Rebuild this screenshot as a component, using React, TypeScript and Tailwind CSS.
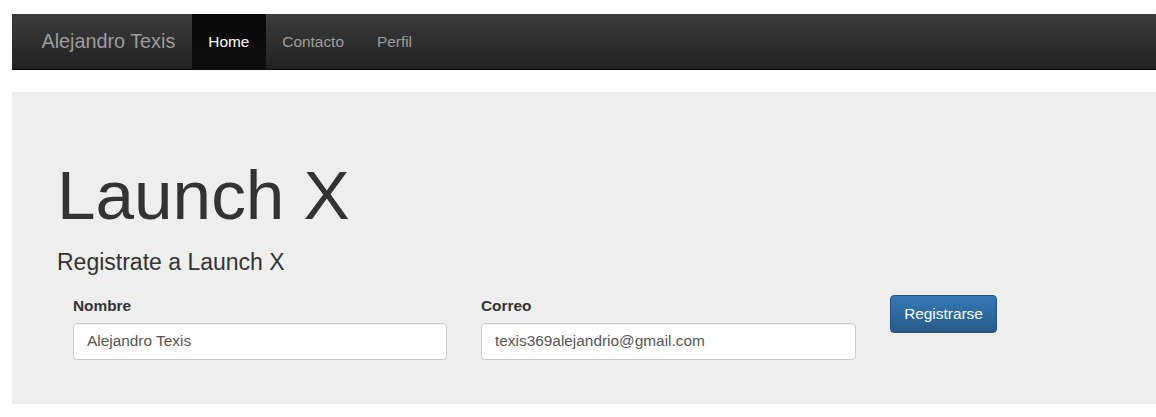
import React from 'react'

const font = { fontFamily: '"Liberation Sans", Arial, Helvetica, sans-serif' }

const navLinks = [
  { label: 'Home', active: true },
  { label: 'Contacto', active: false },
  { label: 'Perfil', active: false },
]

function Navbar() {
  return (
    <nav className="flex h-[56px] items-stretch border-b border-[#080808] bg-gradient-to-b from-[#3c3c3c] to-[#222222] pl-[13px]">
      <a className="flex items-center px-[16.5px] text-[19.8px] text-[#9d9d9d]">Alejandro Texis</a>
      <ul className="flex items-stretch">
        {navLinks.map((link) => (
          <li
            key={link.label}
            className={
              link.active
                ? 'flex items-center bg-gradient-to-b from-[#080808] to-[#0f0f0f] px-[16.5px] text-[15.4px] text-white'
                : 'flex items-center px-[16.5px] text-[15.4px] text-[#9d9d9d]'
            }
          >
            {link.label}
          </li>
        ))}
      </ul>
    </nav>
  )
}

function Field({ label, value, width }: { label: string; value: string; width: string }) {
  return (
    <div className={`flex flex-col ${width}`}>
      <label className="mb-[7px] h-[22px] text-[15.4px] leading-[23px] font-bold text-[#333]">{label}</label>
      <input
        readOnly
        value={value}
        className="h-[37px] w-full rounded-[4px] border border-[#cccccc] bg-white px-[13px] text-[15.4px] text-[#555] shadow-[inset_0_1px_1px_rgba(0,0,0,0.075)] outline-none"
        style={font}
      />
    </div>
  )
}

export default function App() {
  return (
    <div className="min-h-screen overflow-hidden bg-white pt-[14px] pl-[12px]" style={font}>
      <Navbar />

      {/* Jumbotron */}
      <section className="mt-[22px] h-[312px] bg-[#eeeeee] pt-[69px] pl-[45px]">
        <h1 className="text-[69.3px] leading-none font-normal text-[#333]">Launch X</h1>
        <h3 className="mt-[20.7px] h-[23px] text-[23px] leading-none font-normal text-[#333]">Registrate a Launch X</h3>

        <div className="mt-[20px] flex items-start gap-[34px] pl-[16px]">
          <Field label="Nombre" value="Alejandro Texis" width="w-[374px]" />
          <Field label="Correo" value="texis369alejandrio@gmail.com" width="w-[375px]" />
          <button className="mt-[1px] h-[38px] w-[107px] rounded-[4px] border border-[#245580] bg-gradient-to-b from-[#337ab7] to-[#265a88] text-[15.4px] text-white">
            Registrarse
          </button>
        </div>
      </section>
    </div>
  )
}
